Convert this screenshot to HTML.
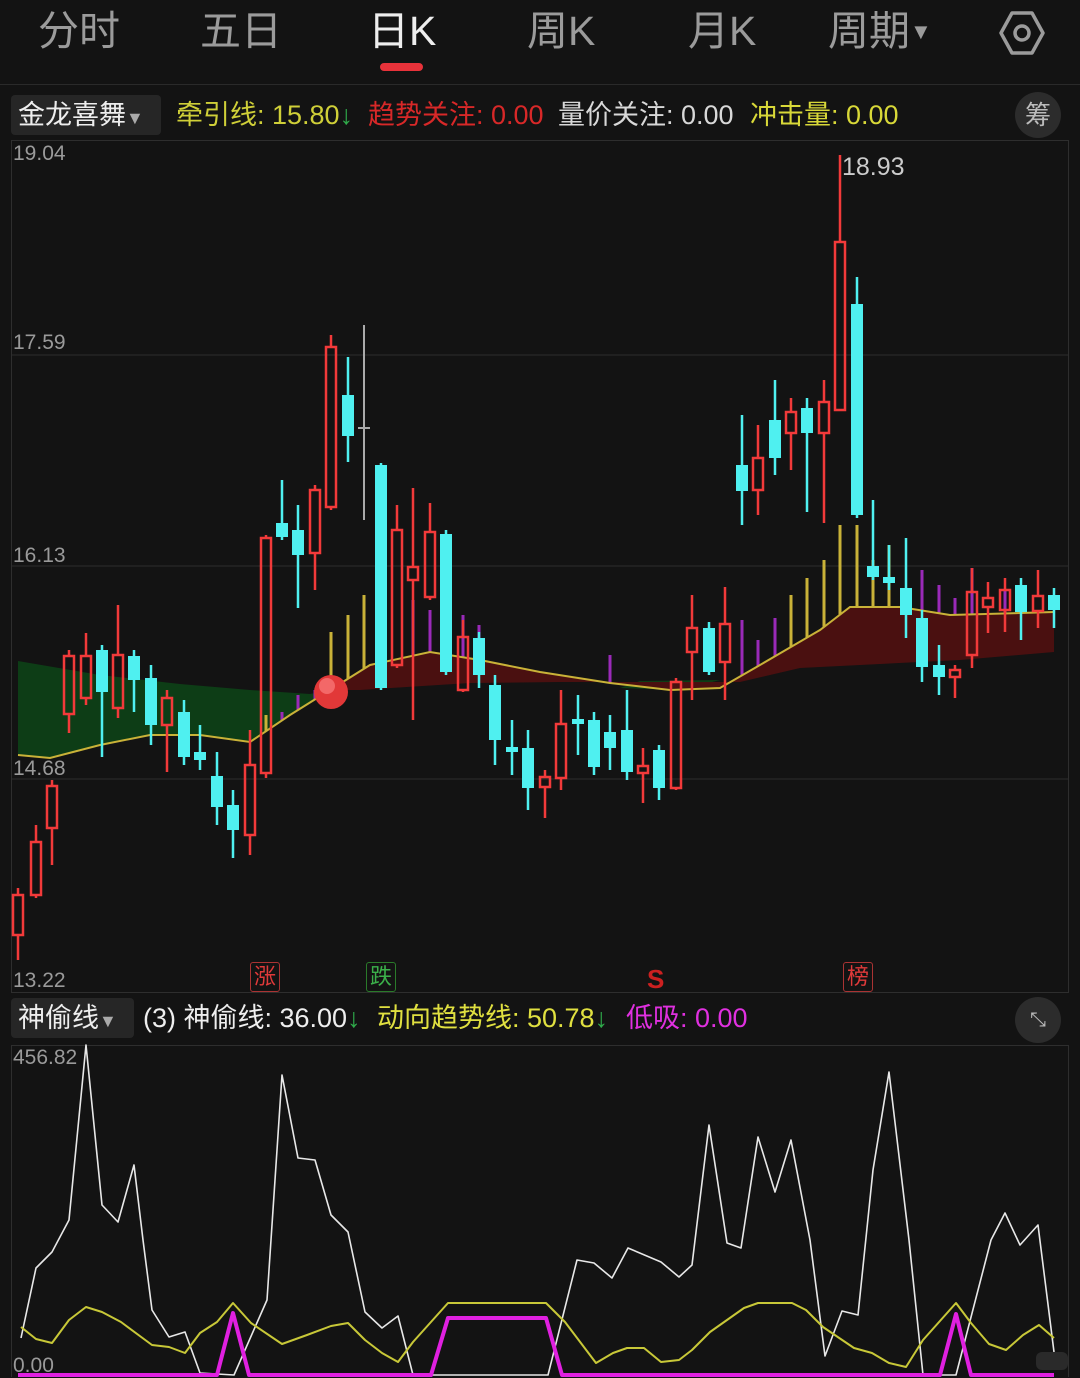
<!DOCTYPE html>
<html><head><meta charset="utf-8"><style>
html,body{margin:0;padding:0;background:#131313;}
body{width:1080px;height:1377px;position:relative;overflow:hidden;font-family:"Liberation Sans","Noto Sans CJK SC",sans-serif;}
.tab{position:absolute;top:5px;font-size:41px;color:#9b9b9b;line-height:52px;}
.t{position:absolute;font-size:27px;line-height:40px;white-space:nowrap;}
.box{position:absolute;background:#262626;border-radius:4px;}
.circ{position:absolute;width:46px;height:46px;border-radius:50%;background:#2c2c2c;color:#bbb;text-align:center;line-height:46px;font-size:26px;}
.lab{position:absolute;font-size:21px;color:#9a9a9a;line-height:24px;}
</style></head><body>
<div class="tab" style="left:38px">分时</div>
<div class="tab" style="left:200px">五日</div>
<div class="tab" style="left:368px;color:#eee">日K</div>
<div class="tab" style="left:527px">周K</div>
<div class="tab" style="left:688px">月K</div>
<div class="tab" style="left:828px">周期<span style="font-size:22px;position:relative;top:-6px">▼</span></div>
<svg style="position:absolute;left:998px;top:9px" width="48" height="48" viewBox="0 0 48 48"><polygon points="14,4 34,4 45,24 34,44 14,44 3,24" fill="none" stroke="#9b9b9b" stroke-width="3.5" stroke-linejoin="round"/><circle cx="24" cy="24" r="7" fill="none" stroke="#9b9b9b" stroke-width="3.5"/></svg>
<div style="position:absolute;left:380px;top:63px;width:43px;height:8px;border-radius:4px;background:#e8323a"></div>
<div style="position:absolute;left:0;top:84px;width:1080px;height:1px;background:#2a2a2a"></div>

<div class="box" style="left:11px;top:95px;width:150px;height:40px"></div>
<div class="t" style="left:18px;top:95px;color:#eee">金龙喜舞<span style="font-size:18px;color:#aaa">▼</span></div>
<div class="t" style="left:176px;top:95px;color:#cfcf38">牵引线: 15.80<span style="color:#2faa4a">↓</span></div>
<div class="t" style="left:368px;top:95px;color:#d82828">趋势关注: 0.00</div>
<div class="t" style="left:558px;top:95px;color:#d8d8d8">量价关注: 0.00</div>
<div class="t" style="left:750px;top:95px;color:#d8d838">冲击量: 0.00</div>
<div class="circ" style="left:1015px;top:92px">筹</div>

<div class="box" style="left:11px;top:998px;width:123px;height:40px"></div>
<div class="t" style="left:18px;top:998px;color:#eee">神偷线<span style="font-size:18px;color:#aaa">▼</span></div>
<div class="t" style="left:143px;top:998px;color:#eee">(3) 神偷线: 36.00<span style="color:#2faa4a">↓</span></div>
<div class="t" style="left:377px;top:998px;color:#e0e040">动向趋势线: 50.78<span style="color:#2faa4a">↓</span></div>
<div class="t" style="left:626px;top:998px;color:#e030e0">低吸: 0.00</div>
<div class="circ" style="left:1015px;top:997px;font-size:20px">⤡</div>

<svg id="c" style="position:absolute;left:0;top:0" width="1080" height="1377"></svg>

<div class="lab" style="left:13px;top:142px">19.04</div>
<div class="lab" style="left:13px;top:331px">17.59</div>
<div class="lab" style="left:13px;top:544px">16.13</div>
<div class="lab" style="left:13px;top:757px">14.68</div>
<div class="lab" style="left:13px;top:969px">13.22</div>
<div class="lab" style="left:842px;top:155px;font-size:25px;color:#ccc">18.93</div>
<div class="lab" style="left:13px;top:1046px">456.82</div>
<div class="lab" style="left:13px;top:1354px">0.00</div>
<div style="position:absolute;left:250px;top:962px;width:28px;height:28px;border:1px solid #a33;border-radius:3px;color:#e03a3a;font-size:22px;text-align:center;line-height:28px">涨</div>
<div style="position:absolute;left:366px;top:962px;width:28px;height:28px;border:1px solid #2a7a2a;border-radius:3px;color:#3bb04a;font-size:22px;text-align:center;line-height:28px">跌</div>
<div style="position:absolute;left:647px;top:964px;color:#cc2020;font-size:26px;font-weight:bold">S</div>
<div style="position:absolute;left:843px;top:962px;width:28px;height:28px;border:1px solid #a33;border-radius:3px;color:#e03a3a;font-size:22px;text-align:center;line-height:28px">榜</div>

<script>
var s='';
function L(x1,y1,x2,y2,c,w){s+='<line x1="'+x1+'" y1="'+y1+'" x2="'+x2+'" y2="'+y2+'" stroke="'+c+'" stroke-width="'+(w||1)+'"/>';}
s+='<rect x="11.5" y="140.5" width="1057" height="852" fill="none" stroke="#2e2e2e"/>';
s+='<rect x="11.5" y="1045.5" width="1057" height="340" fill="none" stroke="#2e2e2e"/>';
[355,566,779].forEach(function(y){L(12,y,1068,y,'#2e2e2e');});
s+='<polygon points="18,661 100,675 180,684 250,690 310,694 330,690 290,715 250,742 200,735 150,735 100,745 50,758 18,755" fill="#0d3d16"/>';
s+='<polygon points="640,681 720,680 680,690 620,688" fill="#0d3d16"/>';
s+='<polygon points="330,690 370,665 430,652 480,660 540,672 610,683 670,690 720,688 760,665 820,630 850,607 900,607 950,615 1054,612 1054,652 960,660 800,668 740,682 670,682 560,682 470,683 360,690" fill="#4a1010"/>';
var vb=[[266,'#c9b238',715],[282,'#9a2ab8',712],[298,'#9a2ab8',695],[315,'#9a2ab8',690],[331,'#c9b238',632],[348,'#c9b238',615],[364,'#c9b238',595],[413,'#9a2ab8',600],[430,'#9a2ab8',610],[463,'#9a2ab8',615],[479,'#9a2ab8',625],[610,'#9a2ab8',655],[742,'#9a2ab8',620],[758,'#9a2ab8',640],[775,'#9a2ab8',618],[791,'#c9b238',595],[807,'#c9b238',578],[824,'#c9b238',560],[840,'#c9b238',525],[857,'#c9b238',525],[873,'#c9b238',560],[889,'#c9b238',545],[922,'#9a2ab8',570],[939,'#9a2ab8',585],[955,'#9a2ab8',598],[972,'#9a2ab8',568],[1005,'#9a2ab8',590]];
var yl=[[18,755],[50,758],[100,745],[150,735],[200,735],[250,742],[290,715],[330,690],[370,665],[430,652],[480,660],[540,672],[610,683],[670,690],[720,688],[760,665],[820,630],[850,607],[900,607],[950,615],[1054,612]];
function yAt(x){for(var i=0;i<yl.length-1;i++){if(x>=yl[i][0]&&x<=yl[i+1][0]){var t=(x-yl[i][0])/(yl[i+1][0]-yl[i][0]);return yl[i][1]+t*(yl[i+1][1]-yl[i][1]);}}return 612;}
vb.forEach(function(v){L(v[0],yAt(v[0]),v[0],v[2],v[1],3);});
s+='<polyline points="'+yl.map(function(p){return p.join(',')}).join(' ')+'" fill="none" stroke="#c9b238" stroke-width="2"/>';
var C=[[18,895,935,888,960,'r'],[36,842,895,825,898,'r'],[52,786,828,780,865,'r'],[69,656,714,650,733,'r'],[86,656,698,633,705,'r'],[102,650,692,645,757,'c'],[118,655,708,605,718,'r'],[134,656,680,650,712,'c'],[151,678,725,665,745,'c'],[167,698,725,690,772,'r'],[184,712,757,700,765,'c'],[200,752,760,725,770,'c'],[217,776,807,752,825,'c'],[233,805,830,790,858,'c'],[250,765,835,730,855,'r'],[266,538,773,535,778,'r'],[282,523,537,480,540,'c'],[298,530,555,505,608,'c'],[315,490,553,485,590,'r'],[331,347,507,335,510,'r'],[348,395,436,357,462,'c'],[364,427,429,325,520,'g'],[381,465,688,463,690,'c'],[397,530,665,505,668,'r'],[413,567,580,488,720,'r'],[430,532,597,503,600,'r'],[446,534,672,530,675,'c'],[463,637,690,620,692,'r'],[479,638,675,632,688,'c'],[495,685,740,675,765,'c'],[512,747,752,720,775,'c'],[528,748,788,730,810,'c'],[545,777,787,770,818,'r'],[561,724,778,690,790,'r'],[578,719,724,695,755,'c'],[594,720,767,712,775,'c'],[610,732,748,715,770,'c'],[627,730,772,690,780,'c'],[643,766,773,748,803,'r'],[659,750,788,745,800,'c'],[676,682,788,678,790,'r'],[692,628,652,595,700,'r'],[709,628,672,622,675,'c'],[725,624,662,587,700,'r'],[742,465,491,415,525,'c'],[758,458,490,425,515,'r'],[775,420,458,380,475,'c'],[791,412,433,398,470,'r'],[807,408,433,398,512,'c'],[824,402,433,380,523,'r'],[840,242,410,155,410,'r'],[857,304,515,277,518,'c'],[873,566,577,500,580,'c'],[889,577,583,545,590,'c'],[906,588,615,538,638,'c'],[922,618,667,610,682,'c'],[939,665,677,645,695,'c'],[955,670,677,665,698,'r'],[972,592,655,568,668,'r'],[988,598,607,582,633,'r'],[1005,590,610,578,632,'r'],[1021,585,612,578,640,'c'],[1038,596,611,570,628,'r'],[1054,595,610,588,628,'c']];
C.forEach(function(c){var x=c[0],col=c[5]=='r'?'#f23a3a':c[5]=='c'?'#4ff0f0':'#aaa';
 if(c[5]=='r'){L(x,c[3],x,c[1],col,2.5);L(x,c[2],x,c[4],col,2.5);s+='<rect x="'+(x-5)+'" y="'+c[1]+'" width="10" height="'+Math.max(c[2]-c[1],2)+'" fill="none" stroke="'+col+'" stroke-width="2.5"/>';}
 else if(c[5]=='c'){L(x,c[3],x,c[4],col,2.5);s+='<rect x="'+(x-6)+'" y="'+c[1]+'" width="12" height="'+Math.max(c[2]-c[1],3)+'" fill="'+col+'"/>';}
 else{L(x,c[3],x,c[4],col,2);L(x-6,c[1]+1,x+6,c[1]+1,col,2);}
});
s+='<circle cx="331" cy="692" r="17" fill="#e23838"/><circle cx="327" cy="686" r="8" fill="#f88" opacity="0.6"/>';
var W=[[21,1338],[36,1268],[52,1252],[69,1220],[86,1045],[102,1205],[118,1222],[134,1165],[143,1240],[152,1310],[169,1337],[185,1332],[200,1373],[234,1375],[267,1300],[282,1075],[298,1158],[315,1160],[331,1215],[348,1232],[365,1312],[382,1328],[398,1316],[413,1375],[548,1375],[577,1260],[594,1263],[612,1278],[628,1248],[661,1262],[679,1277],[692,1265],[709,1125],[727,1243],[741,1248],[758,1137],[775,1192],[791,1140],[810,1240],[825,1356],[842,1311],[858,1315],[873,1170],[889,1072],[909,1240],[923,1375],[956,1375],[991,1240],[1005,1213],[1020,1245],[1038,1225],[1054,1352]];
var Y=[[21,1327],[36,1339],[52,1343],[69,1320],[86,1307],[102,1312],[121,1322],[152,1345],[169,1347],[185,1353],[200,1333],[217,1322],[233,1303],[251,1323],[282,1344],[307,1335],[331,1326],[348,1323],[365,1340],[382,1353],[398,1362],[413,1342],[448,1303],[546,1303],[565,1322],[596,1363],[613,1353],[627,1348],[644,1348],[661,1362],[679,1360],[692,1350],[710,1332],[744,1308],[758,1303],[792,1303],[806,1310],[823,1327],[854,1348],[872,1353],[889,1363],[906,1367],[923,1340],[956,1303],[971,1323],[989,1344],[1006,1350],[1023,1335],[1039,1325],[1054,1338]];
var M=[[18,1375],[217,1375],[233,1313],[249,1375],[431,1375],[448,1318],[546,1318],[562,1375],[940,1375],[956,1314],[971,1375],[1054,1375]];
function P(a,c,w){s+='<polyline points="'+a.map(function(p){return p.join(',')}).join(' ')+'" fill="none" stroke="'+c+'" stroke-width="'+w+'" stroke-linejoin="round"/>';}
P(W,'#e8e8e8',1.6);P(Y,'#c8c838',2);P(M,'#e020e0',4);
s+='<rect x="1036" y="1352" width="32" height="18" rx="6" fill="#2a2a2a"/>';
document.getElementById('c').innerHTML=s;
</script>
</body></html>
